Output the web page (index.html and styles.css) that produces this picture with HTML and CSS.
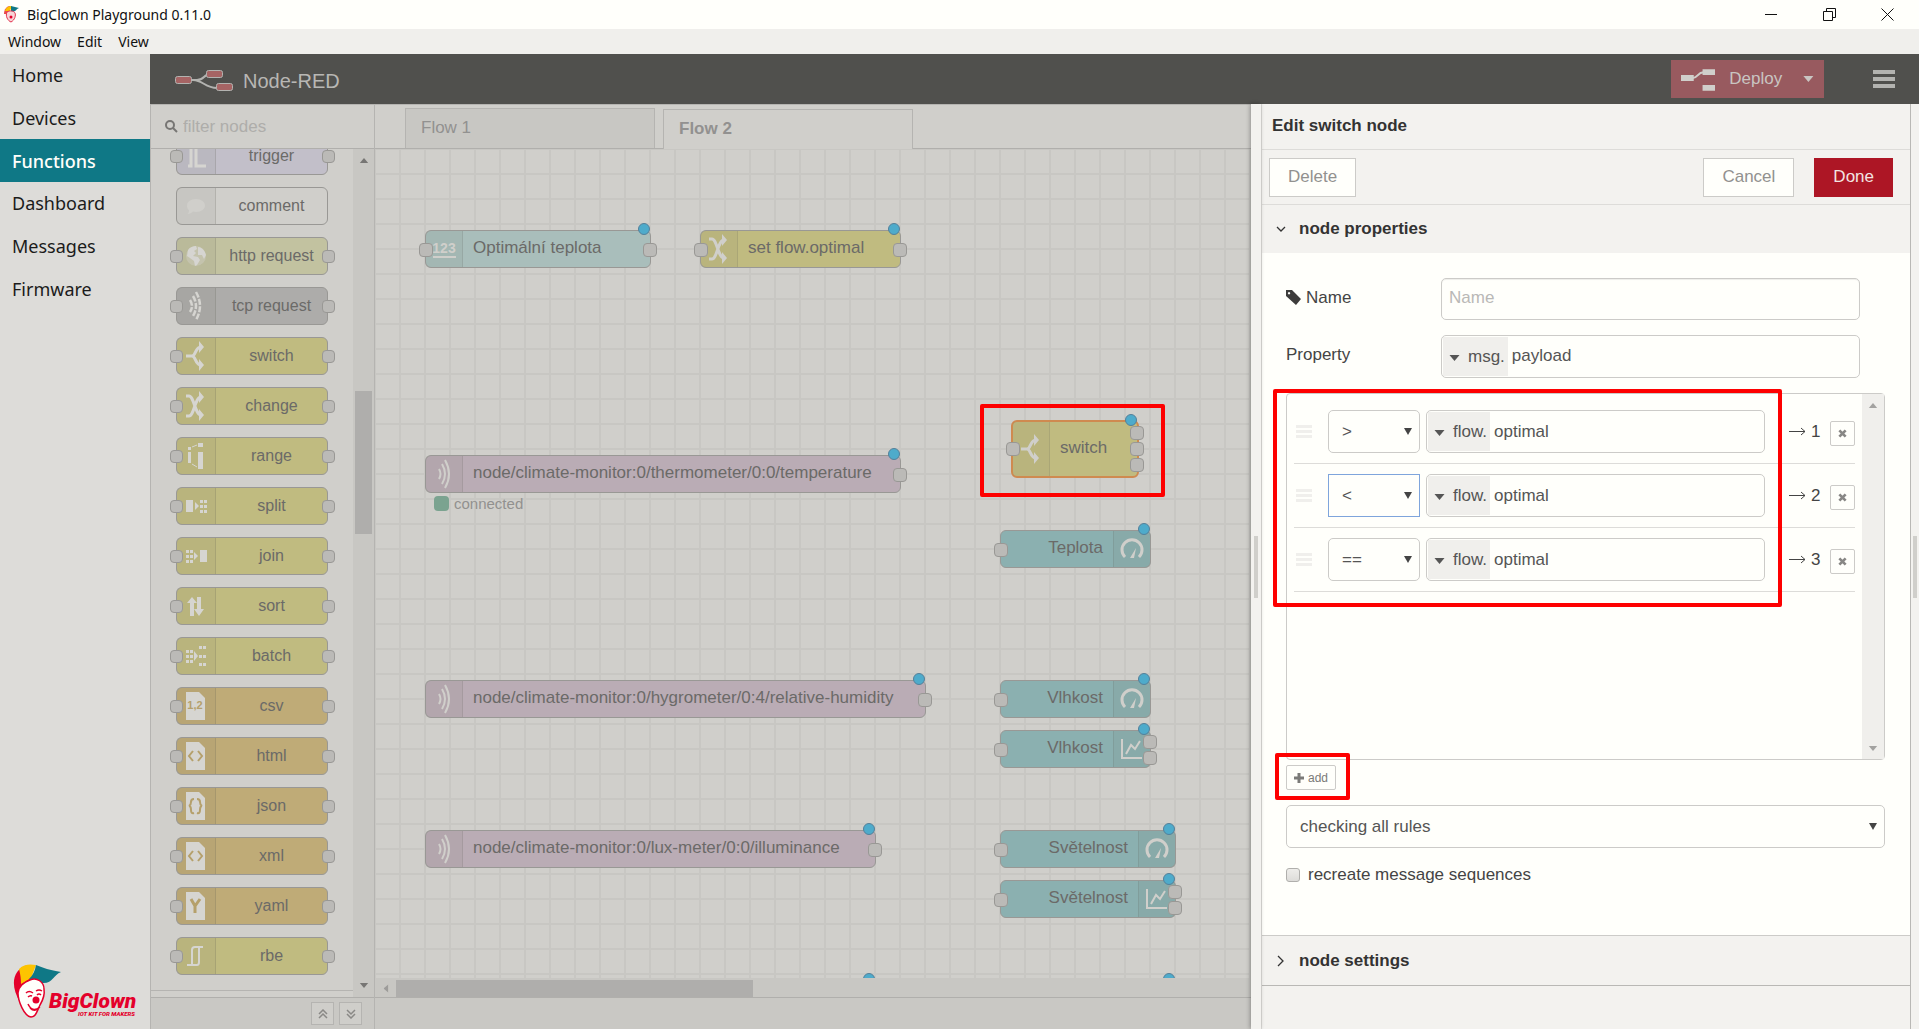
FILE: index.html
```html
<!DOCTYPE html>
<html lang="en">
<head>
<meta charset="utf-8">
<title>BigClown Playground 0.11.0</title>
<link rel="stylesheet" href="styles.css">
</head>
<body>
<svg class="sprite" aria-hidden="true">
  <symbol id="i-trigger" viewBox="0 0 24 30"><path d="M4 25h3V3h3M12 3v22h10" fill="none" stroke="currentColor" stroke-width="3"/></symbol>
  <symbol id="i-comment" viewBox="0 0 24 30"><path d="M12 8c5.500 0 9 3 9 6.500S17.500 21 12 21c-1 0-2 0-3-.4C7.500 22 6 23 3.500 23c1-1 1.500-2.200 1.500-3.600C3.500 18 3 16.500 3 14.500 3 11 6.500 8 12 8z" fill="currentColor"/></symbol>
  <symbol id="i-globe" viewBox="0 0 24 30"><circle cx="12" cy="15" r="10" fill="currentColor" opacity=".35"/><path d="M4 9c2-3 5-4 8-4l1 3-3 2 2 2-3 3 5 1 2 3-3 5-2 1-1-5-4-3-3-2zM14 6c4 0 7 4 8 8l-2 4-2-4-4 0 0-4z" fill="currentColor"/></symbol>
  <symbol id="i-wave" viewBox="0 0 24 30"><path d="M7 10q3 5 0 10M10 5q6 10 0 20M13 1q8 14 0 28" fill="none" stroke="currentColor" stroke-width="2"/></symbol>
  <symbol id="i-tcp" viewBox="0 0 24 30"><path d="M6 9q4 6 0 12M9 5q6 10 0 20M12 1q8 14 0 28" fill="none" stroke="currentColor" stroke-width="2.500" stroke-dasharray="6 1.500"/></symbol>
  <symbol id="i-switch" viewBox="0 0 24 30"><path d="M2 15h6c4 0 3-9 9-9M8 15c4 0 3 9 9 9" fill="none" stroke="currentColor" stroke-width="3"/><path d="M15 0l5 6-5 6zM15 18l5 6-5 6z" fill="currentColor"/></symbol>
  <symbol id="i-change" viewBox="0 0 24 30"><path d="M2 5h3c5 0 6 19 12 19M2 25h3c5 0 6-19 12-19" fill="none" stroke="currentColor" stroke-width="3"/><path d="M15 0l5 6-5 6zM15 18l5 6-5 6z" fill="currentColor"/></symbol>
  <symbol id="i-range" viewBox="0 0 24 30"><path d="M4 6h3v3H4zM4 11h3v11H4zM14 2h5v4h-5zM14 11h5v17h-5z" fill="currentColor"/><path d="M8 6l5-2M8 23l5 3" stroke="currentColor"/></symbol>
  <symbol id="i-split" viewBox="0 0 24 30"><path d="M2 9h7v12H2zM11 11l4 4-4 4zM16 9h3v3h-3zM20 9h3v3h-3zM16 14h3v3h-3zM20 14h3v3h-3zM16 19h3v3h-3zM20 19h3v3h-3z" fill="currentColor"/></symbol>
  <symbol id="i-join" viewBox="0 0 24 30"><path d="M16 9h7v12h-7zM10 11l4 4-4 4zM2 9h3v3H2zM6 9h3v3H6zM2 14h3v3H2zM6 14h3v3H6zM2 19h3v3H2zM6 19h3v3H6z" fill="currentColor"/></symbol>
  <symbol id="i-sort" viewBox="0 0 24 30"><path d="M8 6l5 6h-3v13H6V12H3zM13 6h4v12h3l-5 7-5-7h3z" fill="currentColor"/></symbol>
  <symbol id="i-batch" viewBox="0 0 24 30"><path d="M10 10l4 5-4 5zM2 9h3v3H2zM6 9h3v3H6zM2 14h3v3H2zM6 14h3v3H6zM2 19h3v3H2zM6 19h3v3H6zM15 5h3v3h-3zM19 5h3v3h-3zM15 14h3v3h-3zM19 14h3v3h-3zM15 22h3v3h-3zM19 22h3v3h-3z" fill="currentColor"/></symbol>
  <symbol id="i-file" viewBox="0 0 24 30"><path d="M2 1h13l6 6v22H2z" fill="currentColor"/></symbol>
  <symbol id="i-rbe" viewBox="0 0 24 30"><path d="M3 24h10q2 0 2-3V6M19 6H11q-3 0-3 3v15" fill="none" stroke="currentColor" stroke-width="2"/></symbol>
  <symbol id="i-gauge" viewBox="0 0 24 30"><path d="M5 23a10 10 0 1 1 14 0" fill="none" stroke="currentColor" stroke-width="3"/><path d="M10 24l6-10-2 10z" fill="currentColor"/></symbol>
  <symbol id="i-chart" viewBox="0 0 24 30"><path d="M2 5v19h20M6 20l5-9 4 4 5-8" fill="none" stroke="currentColor" stroke-width="2"/></symbol>
  <symbol id="i-grip" viewBox="0 0 16 14"><path d="M0 1.500h16M0 6.500h16M0 11.500h16" stroke="currentColor" stroke-width="3"/></symbol>
  <symbol id="i-x" viewBox="0 0 10 10"><path d="M1.500 1.500l7 7M8.500 1.500l-7 7" stroke="currentColor" stroke-width="3"/></symbol>
  <symbol id="i-caret" viewBox="0 0 10 6"><path d="M0 0h10L5 6z" fill="currentColor"/></symbol>
</svg>

<header class="titlebar">
  <svg class="app-icon" viewBox="0 0 15 17"><path d="M0 8C0 3 3 0 6 0v5L3 8z" fill="#e94b4b"/><path d="M1 5c1-4 4-5 7-5L6 5z" fill="#fdc400"/><path d="M7 0l8 2c-3 1-3 4-8 4z" fill="#0f7886"/><path d="M3 6c3-2 7-1 8 1s0 7-4 9C4 15 1 10 3 6z" fill="#f7d5d8" stroke="#e3304b"/><circle cx="7" cy="11" r="1.500" fill="#e4002b"/></svg>
  <h1 class="titlebar-text">BigClown Playground 0.11.0</h1>
  <div class="win-controls">
    <button class="win-btn" aria-label="Minimize"><svg width="12" height="13"><path d="M0 6.500h12" stroke="#111"/></svg></button>
    <button class="win-btn" aria-label="Restore"><svg width="13" height="13"><path d="M.5 3.500h9v9h-9zM3.500 3V.5h9v9H10" fill="none" stroke="#111"/></svg></button>
    <button class="win-btn" aria-label="Close"><svg width="13" height="13"><path d="M.5.5l12 12M12.500.5l-12 12" stroke="#111"/></svg></button>
  </div>
</header>
<nav class="menubar"><button>Window</button><button>Edit</button><button>View</button></nav>

<div class="shell">
  <aside class="sidebar">
    <nav class="side-nav">
      <a href="#home">Home</a><a href="#devices">Devices</a><a href="#functions" class="active">Functions</a><a href="#dashboard">Dashboard</a><a href="#messages">Messages</a><a href="#firmware">Firmware</a>
    </nav>
    <svg class="brand" viewBox="0 0 128 56" role="img" aria-label="BigClown IoT kit for makers">
      <path d="M8 38C-2 22 0 5 16 1L20 16 10 22z" fill="#e4002b"/>
      <path d="M7 5C12 0 18 0 24 1L19 14 9 20C9 13 8 9 7 5z" fill="#fdc400"/>
      <path d="M24 1c7 3 14 5 25 7-8 3-8 12-19 11-5-1-8-3-13-4 4-4 6-8 7-14z" fill="#0f7886"/>
      <path d="M18 16c7-3 14 2 14 9 1 6-1 11-4 16-3 6-4 12-9 12C12 52 6 37 6 29c0-6 6-11 12-13z" fill="#fffffb" stroke="#e4002b" stroke-width="1.500"/>
      <path d="M14 29q3-3 7 0M24 27q3-2 6 0M16 33q2-2 4-1M25 31q2-2 4 0M16 40q4 9 12 3M18 44q4 4 8 1" fill="none" stroke="#e4002b" stroke-width="1.500"/>
      <circle cx="24" cy="36" r="3.500" fill="#e4002b"/>
      <text class="brand-name" x="37" y="44">BigClown</text>
      <text class="brand-tag" x="66" y="52">IOT KIT FOR MAKERS</text>
    </svg>
  </aside>

  <main class="nodered">
    <header class="nr-header">
      <svg class="nr-logo" width="58" height="24" viewBox="0 0 58 24"><path d="M16 11h6c8 0 6-6 14-6M18 11c10 0 12 8 24 8" fill="none" stroke="#b3b3b0" stroke-width="2"/><g fill="#a66464" stroke="#b3b3b0"><rect x=".5" y="7.500" width="16" height="7" rx="2"/><rect x="31.500" y="1.500" width="16" height="7" rx="2"/><rect x="41.500" y="14.500" width="16" height="7" rx="2"/></g></svg>
      <span class="nr-title">Node-RED</span>
      <button class="deploy"><svg width="35" height="23" viewBox="0 0 35 23"><path d="M0 7h13v6H0zM22 1h13v6H22zM22 17h13v6H22z" fill="#d0cfcb"/><path d="M12 10c5 0 5-6 11-6" fill="none" stroke="#d0cfcb" stroke-width="2"/></svg><span>Deploy</span><svg class="deploy-caret"><use href="#i-caret"/></svg></button>
      <button class="burger" aria-label="Menu"><svg width="22" height="18"><path d="M0 2h22M0 9h22M0 16h22" stroke="#b3b3b0" stroke-width="4"/></svg></button>
    </header>

    <div class="nr-body">
      <section class="palette">
        <label class="filter"><svg width="13" height="13" viewBox="0 0 13 13"><circle cx="5" cy="5" r="4" fill="none" stroke="#777674" stroke-width="2"/><path d="M8 8l4 4" stroke="#777674" stroke-width="2"/></svg><input type="text" placeholder="filter nodes" aria-label="filter nodes"></label>
        <div class="palette-main">
          <div class="palette-list">
            <div class="pnode lilac"><span class="pic"><svg><use href="#i-trigger"/></svg></span><span class="plabel">trigger</span><i class="port in"></i><i class="port out"></i></div>
            <div class="pnode plain"><span class="pic"><svg><use href="#i-comment"/></svg></span><span class="plabel">comment</span></div>
            <div class="pnode pale"><span class="pic"><svg><use href="#i-globe"/></svg></span><span class="plabel">http request</span><i class="port in"></i><i class="port out"></i></div>
            <div class="pnode grey"><span class="pic"><svg><use href="#i-tcp"/></svg></span><span class="plabel">tcp request</span><i class="port in"></i><i class="port out"></i></div>
            <div class="pnode olive"><span class="pic"><svg><use href="#i-switch"/></svg></span><span class="plabel">switch</span><i class="port in"></i><i class="port out"></i></div>
            <div class="pnode olive"><span class="pic"><svg><use href="#i-change"/></svg></span><span class="plabel">change</span><i class="port in"></i><i class="port out"></i></div>
            <div class="pnode olive"><span class="pic"><svg><use href="#i-range"/></svg></span><span class="plabel">range</span><i class="port in"></i><i class="port out"></i></div>
            <div class="pnode olive"><span class="pic"><svg><use href="#i-split"/></svg></span><span class="plabel">split</span><i class="port in"></i><i class="port out"></i></div>
            <div class="pnode olive"><span class="pic"><svg><use href="#i-join"/></svg></span><span class="plabel">join</span><i class="port in"></i><i class="port out"></i></div>
            <div class="pnode olive"><span class="pic"><svg><use href="#i-sort"/></svg></span><span class="plabel">sort</span><i class="port in"></i><i class="port out"></i></div>
            <div class="pnode olive"><span class="pic"><svg><use href="#i-batch"/></svg></span><span class="plabel">batch</span><i class="port in"></i><i class="port out"></i></div>
            <div class="pnode tan"><span class="pic"><svg viewBox="0 0 24 30"><use href="#i-file"/><text x="11" y="18" text-anchor="middle" class="glyph">1,2</text></svg></span><span class="plabel">csv</span><i class="port in"></i><i class="port out"></i></div>
            <div class="pnode tan"><span class="pic"><svg viewBox="0 0 24 30"><use href="#i-file"/><path class="cut" d="M9 10l-4 5 4 5M14 10l4 5-4 5"/></svg></span><span class="plabel">html</span><i class="port in"></i><i class="port out"></i></div>
            <div class="pnode tan"><span class="pic"><svg viewBox="0 0 24 30"><use href="#i-file"/><path class="cut" d="M10 8q-3 0-3 3t-2 4q2 0 2 4t3 3M13 8q3 0 3 3t2 4q-2 0-2 4t-3 3"/></svg></span><span class="plabel">json</span><i class="port in"></i><i class="port out"></i></div>
            <div class="pnode tan"><span class="pic"><svg viewBox="0 0 24 30"><use href="#i-file"/><path class="cut" d="M9 10l-4 5 4 5M14 10l4 5-4 5"/></svg></span><span class="plabel">xml</span><i class="port in"></i><i class="port out"></i></div>
            <div class="pnode tan"><span class="pic"><svg viewBox="0 0 24 30"><use href="#i-file"/><path class="cut bold" d="M7 8l4 7 5-7M11 14v8"/></svg></span><span class="plabel">yaml</span><i class="port in"></i><i class="port out"></i></div>
            <div class="pnode olive"><span class="pic"><svg><use href="#i-rbe"/></svg></span><span class="plabel">rbe</span><i class="port in"></i><i class="port out"></i></div>
          </div>
          <div class="vscroll"><svg class="arrow up"><use href="#i-caret"/></svg><div class="vthumb"></div><svg class="arrow"><use href="#i-caret"/></svg></div>
        </div>
        <footer class="palette-foot">
          <button aria-label="Collapse all"><svg width="10" height="10"><path d="M1 5l4-4 4 4M1 9l4-4 4 4" fill="none" stroke="#8a8986" stroke-width="1.500"/></svg></button>
          <button aria-label="Expand all"><svg width="10" height="10"><path d="M1 1l4 4 4-4M1 5l4 4 4-4" fill="none" stroke="#8a8986" stroke-width="1.500"/></svg></button>
        </footer>
      </section>

      <section class="workspace">
        <nav class="tabs"><a href="#flow1" class="tab">Flow 1</a><a href="#flow2" class="tab current">Flow 2</a></nav>
        <div class="canvas">
          <div class="node ice" style="left:50px;top:81px;width:226px"><span class="nic num">123</span><span class="nlabel">Optimální teplota</span><i class="port in"></i><i class="port out"></i><i class="dot"></i></div>
          <div class="node olive" style="left:325px;top:81px;width:201px"><span class="nic"><svg><use href="#i-change"/></svg></span><span class="nlabel">set flow.optimal</span><i class="port in"></i><i class="port out"></i><i class="dot"></i></div>
          <div class="node mauve" style="left:50px;top:306px;width:476px"><span class="nic"><svg><use href="#i-wave"/></svg></span><span class="nlabel">node/climate-monitor:0/thermometer/0:0/temperature</span><i class="port out"></i><i class="dot"></i></div>
          <div class="status" style="left:59px;top:347px"><i></i>connected</div>
          <div class="node olive tall selected" style="left:636px;top:271px;width:128px"><span class="nic"><svg><use href="#i-switch"/></svg></span><span class="nlabel">switch</span><i class="port in"></i><i class="port out first"></i><i class="port out"></i><i class="port out last"></i><i class="dot"></i></div>
          <div class="node teal right" style="left:625px;top:381px;width:151px"><span class="nic"><svg><use href="#i-gauge"/></svg></span><span class="nlabel">Teplota</span><i class="port in"></i><i class="dot"></i></div>
          <div class="node mauve" style="left:50px;top:531px;width:501px"><span class="nic"><svg><use href="#i-wave"/></svg></span><span class="nlabel">node/climate-monitor:0/hygrometer/0:4/relative-humidity</span><i class="port out"></i><i class="dot"></i></div>
          <div class="node teal right" style="left:625px;top:531px;width:151px"><span class="nic"><svg><use href="#i-gauge"/></svg></span><span class="nlabel">Vlhkost</span><i class="port in"></i><i class="dot"></i></div>
          <div class="node teal right" style="left:625px;top:581px;width:151px"><span class="nic"><svg><use href="#i-chart"/></svg></span><span class="nlabel">Vlhkost</span><i class="port in"></i><i class="port out upper"></i><i class="port out lower"></i><i class="dot"></i></div>
          <div class="node mauve" style="left:50px;top:681px;width:451px"><span class="nic"><svg><use href="#i-wave"/></svg></span><span class="nlabel">node/climate-monitor:0/lux-meter/0:0/illuminance</span><i class="port out"></i><i class="dot"></i></div>
          <div class="node teal right" style="left:625px;top:681px;width:176px"><span class="nic"><svg><use href="#i-gauge"/></svg></span><span class="nlabel">Světelnost</span><i class="port in"></i><i class="dot"></i></div>
          <div class="node teal right" style="left:625px;top:731px;width:176px"><span class="nic"><svg><use href="#i-chart"/></svg></span><span class="nlabel">Světelnost</span><i class="port in"></i><i class="port out upper"></i><i class="port out lower"></i><i class="dot"></i></div>
          <div class="node mauve" style="left:50px;top:831px;width:451px"><i class="dot"></i></div>
          <div class="node teal" style="left:625px;top:831px;width:176px"><i class="dot"></i></div>
          <div class="callout" style="left:605px;top:255px;width:185px;height:93px"></div>
        </div>
        <div class="hscroll"><svg class="arrow left"><use href="#i-caret"/></svg><div class="hthumb"></div></div>
        <footer class="ws-foot"></footer>
      </section>

      <div class="gutter"><div class="handle"></div></div>
      <form class="tray" onsubmit="return false">
        <h2 class="tray-title">Edit switch node</h2>
        <div class="tray-actions"><button class="btn">Delete</button><span class="grow"></span><button class="btn">Cancel</button><button class="btn primary">Done</button></div>
        <h3 class="section-head"><svg width="10" height="10"><path d="M1 3l4 4 4-4" fill="none" stroke="#333" stroke-width="1.300"/></svg>node properties</h3>
        <div class="props">
          <div class="field"><label for="name"><svg width="15" height="15" viewBox="0 0 15 15"><path fill-rule="evenodd" d="M0 0h6l9 9-5 6L0 6zM3 2a1.200 1.200 0 1 0 .1 0z" fill="#3d3c3b"/></svg>Name</label><input id="name" type="text" placeholder="Name"></div>
          <div class="field"><label for="prop">Property</label><div class="typed wide"><button class="type"><svg class="car"><use href="#i-caret"/></svg>msg.</button><input id="prop" type="text" value="payload"></div></div>
          <div class="rules-wrap">
            <div class="rules">
              <ol class="rule-list">
                <li><svg class="grip"><use href="#i-grip"/></svg><span class="sel"><select aria-label="Operator 1"><option>&gt;</option></select></span><div class="typed"><button class="type"><svg class="car"><use href="#i-caret"/></svg>flow.</button><input type="text" value="optimal" aria-label="Value 1"></div><span class="outp"><svg width="17" height="9"><path d="M0 4.500h16M12 1l4 3.500-4 3.500" fill="none" stroke="#444"/></svg>1</span><button class="del" aria-label="Remove rule 1"><svg><use href="#i-x"/></svg></button></li>
                <li><svg class="grip"><use href="#i-grip"/></svg><span class="sel focus"><select aria-label="Operator 2"><option>&lt;</option></select></span><div class="typed"><button class="type"><svg class="car"><use href="#i-caret"/></svg>flow.</button><input type="text" value="optimal" aria-label="Value 2"></div><span class="outp"><svg width="17" height="9"><path d="M0 4.500h16M12 1l4 3.500-4 3.500" fill="none" stroke="#444"/></svg>2</span><button class="del" aria-label="Remove rule 2"><svg><use href="#i-x"/></svg></button></li>
                <li><svg class="grip"><use href="#i-grip"/></svg><span class="sel"><select aria-label="Operator 3"><option>==</option></select></span><div class="typed"><button class="type"><svg class="car"><use href="#i-caret"/></svg>flow.</button><input type="text" value="optimal" aria-label="Value 3"></div><span class="outp"><svg width="17" height="9"><path d="M0 4.500h16M12 1l4 3.500-4 3.500" fill="none" stroke="#444"/></svg>3</span><button class="del" aria-label="Remove rule 3"><svg><use href="#i-x"/></svg></button></li>
              </ol>
              <div class="vscroll light"><svg class="arrow up"><use href="#i-caret"/></svg><svg class="arrow"><use href="#i-caret"/></svg></div>
            </div>
            <div class="callout rules-mark"></div>
          </div>
          <div class="add-row"><button class="add"><svg width="10" height="10"><path d="M5 0v10M0 5h10" stroke="#7b7a78" stroke-width="3"/></svg>add</button><div class="callout add-mark"></div></div>
          <span class="sel check-sel"><select aria-label="Rule checking"><option>checking all rules</option></select></span>
          <label class="recreate"><input type="checkbox">recreate message sequences</label>
        </div>
        <h3 class="section-head closed"><svg width="10" height="12"><path d="M2 1l5 5-5 5" fill="none" stroke="#333" stroke-width="1.300"/></svg>node settings</h3>
        <div class="tray-rest"></div>
      </form>
      <div class="gutter slim"><div class="handle"></div></div>
    </div>
  </main>
</div>
</body>
</html>
```
FILE: styles.css
```css
* { box-sizing: border-box; }
body {
  margin: 0; height: 100vh; overflow: hidden; display: flex; flex-direction: column;
  font-family: "Liberation Sans", Arial, sans-serif; font-size: 17px; color: #444;
  background: #fffffb;
}
button, input, select { font: inherit; color: inherit; }
button { padding: 0; border: 0; background: none; }
h1, h2, h3 { margin: 0; font-size: 17px; }
.sprite { position: absolute; width: 0; height: 0; }

/* window chrome */
.titlebar { flex: none; height: 29px; display: flex; align-items: center; padding: 0 0 0 4px; background: #fffffb; font-family: "Noto Sans", sans-serif; color: #111; }
.app-icon { width: 15px; height: 17px; }
.titlebar-text { font-size: 14px; font-weight: 400; margin-left: 8px; }
.win-controls { margin-left: auto; display: flex; padding-right: 3px; }
.win-btn { width: 58px; height: 29px; display: grid; place-items: center; }
.menubar { flex: none; height: 25px; display: flex; align-items: center; gap: 16px; padding-left: 8px; background: #f0efec; font-family: "Noto Sans", sans-serif; font-size: 14px; color: #111; }

.shell { flex: 1; min-height: 0; display: flex; }
.sidebar { width: 150px; flex: none; background: #dddcd9; display: flex; flex-direction: column; justify-content: space-between; font-family: "Noto Sans", sans-serif; }
.side-nav { height: 256px; display: grid; grid-auto-rows: 1fr; }
.side-nav a { display: flex; align-items: center; padding-left: 12px; font-size: 18px; color: #1b1b1b; text-decoration: none; }
.side-nav .active { background: #0f7886; color: #fffffb; font-weight: 500; }
.brand { width: 128px; height: 56px; margin: 0 0 9px 12px; }
.brand-name { font: italic 900 21px Roboto, sans-serif; fill: #e4002b; }
.brand-tag { font: italic 900 6px Roboto, sans-serif; fill: #e4002b; }

/* editor frame */
.nodered { flex: 1; min-width: 0; display: flex; flex-direction: column; }
.nr-header { height: 50px; flex: none; display: flex; align-items: center; padding: 0 24px 0 25px; background: #50504d; color: #b8b7b4; }
.nr-title { font-size: 20px; margin: 4px 0 0 10px; }
.nr-logo { margin-top: 4px; }
.deploy { margin-left: auto; width: 153px; height: 38px; display: flex; align-items: center; padding: 0 10px; background: #985a5f; color: #c9c5c2; }
.deploy span { margin: 0 21px 0 14px; }
.deploy-caret { width: 11px; height: 6px; }
.burger { margin-left: 49px; height: 18px; }
.nr-body { flex: 1; min-height: 0; display: flex; }

.palette { width: 225px; flex: none; display: flex; flex-direction: column; background: #d0cfcb; border: 1px solid #b5b4b1; border-width: 1px 1px 0 1px; }
.filter { height: 44px; flex: none; display: flex; align-items: center; gap: 5px; padding-left: 14px; border-bottom: 1px solid #b0afac; }
.filter input { width: 180px; border: 0; padding: 0; background: none; outline: 0; }
.filter input::placeholder { color: #aeadaa; }
.palette-main { flex: 1; min-height: 0; display: flex; }
.palette-list { flex: 1; display: flex; flex-direction: column; justify-content: flex-end; gap: 12px; padding: 0 25px 15px; margin-bottom: 6px; border-bottom: 1px solid #b5b4b1; overflow: hidden; }
.palette-foot { height: 32px; flex: none; display: flex; justify-content: flex-end; gap: 5px; padding: 4px 12px; background: #c9c8c4; border-top: 1px solid #b0afac; }
.palette-foot button { width: 23px; height: 23px; display: grid; place-items: center; border: 1px solid #b5b4b1; background: #cfceca; }

.pnode { position: relative; flex: none; width: 152px; height: 38px; display: flex; border: 1px solid #999895; border-radius: 6px; color: #6b6a68; font-size: 16px; }
.pic { width: 39px; display: grid; place-items: center; background: rgb(100 100 90 / 8%); border-right: 1px solid rgb(90 90 80 / 18%); color: #d6d5d1; }
.pic svg { width: 24px; height: 30px; }
.plabel { flex: 1; display: grid; place-items: center; padding-bottom: 1px; }
.cut { fill: none; stroke: #b5a06b; stroke-width: 2; }
.cut.bold { stroke-width: 3; }
.glyph { font: bold 11px "Liberation Sans", sans-serif; fill: #b5a06b; }
.lilac { background: #c2bfc9; }
.plain { background: #d0cfcb; }
.plain .pic { color: #d0cfcb; }
.pale { background: #c2c2a0; }
.grey { background: #adacaa; }
.olive { background: #c0bb80; }
.tan { background: #bfab77; }
.ice { background: #a9bebb; }
.mauve { background: #baacb5; }
.teal { background: #8bb0b0; }

.port { position: absolute; top: 12px; width: 13px; height: 13px; border: 1px solid #999895; border-radius: 4px; background: #bbbab7; }
.port.in { left: -7px; }
.port.out { right: -8px; }

.vscroll { width: 21px; display: flex; flex-direction: column; justify-content: space-between; align-items: center; padding: 9px 0; background: #c8c7c3; color: #777674; }
.arrow { width: 10px; height: 5px; }
.arrow.up { transform: rotate(180deg); }
.vthumb { width: 17px; height: 143px; margin-top: 228px; margin-bottom: auto; flex: none; background: #afaeac; }
.vscroll.light { width: 22px; background: #f0efec; color: #a3a2a0; padding: 9px 0 8px; }

.workspace { flex: 1; min-width: 0; display: flex; flex-direction: column; background: #d0cfcb; border-top: 1px solid #b5b4b1; }
.tabs { height: 44px; flex: none; display: flex; align-items: flex-end; gap: 8px; padding-left: 30px; border-bottom: 1px solid #b0afac; }
.tab { width: 250px; height: 40px; padding: 9px 15px; border: 1px solid #b5b4b1; border-bottom: 0; background: #c8c7c3; color: #929190; text-decoration: none; }
.tab.current { background: #d0cfcb; font-weight: bold; margin-bottom: -1px; }
.canvas {
  position: relative; flex: 1; min-height: 0; overflow: hidden;
  background-image: linear-gradient(#c8c7c3 2px, transparent 2px), linear-gradient(90deg, #c8c7c3 2px, transparent 2px);
  background-size: 25px 25px; background-position: -1px -1px;
}
.node { position: absolute; height: 38px; display: flex; border: 1px solid #999895; border-radius: 6px; color: #6b6a68; }
.node .port { width: 14px; height: 14px; }
.node .port.out { right: -7px; }
.node.tall { height: 58px; }
.nic { width: 37px; flex: none; display: grid; place-items: center; background: rgb(100 100 90 / 8%); border-right: 1px solid rgb(90 90 80 / 15%); color: #d0cfcb; }
.nic svg { width: 24px; height: 30px; }
.num { font-size: 14px; font-weight: bold; align-content: center; }
.num::after { content: ""; width: 23px; height: 2px; background: #d0cfcb; }
.nlabel { flex: 1; align-self: center; padding: 0 10px 2px; white-space: nowrap; }
.node.right { flex-direction: row-reverse; }
.right .nic { border-right: 0; border-left: 1px solid rgb(90 90 80 / 15%); }
.right .nlabel { text-align: right; }
.selected { border: 2px solid #cf8a50; }
.tall .port { top: 20px; }
.tall .first { top: 4px; }
.tall .last { top: 36px; }
.upper { top: 4px; }
.lower { top: 20px; }
.dot { position: absolute; top: -8px; right: 0; width: 12px; height: 12px; border: 1px solid #54809a; border-radius: 50%; background: #4eabcb; }
.status { position: absolute; display: flex; align-items: center; gap: 5px; font-size: 15px; line-height: 15px; color: #92918f; }
.status i { width: 15px; height: 15px; border-radius: 4px; background: #7ba390; }
.callout { position: absolute; border: 4px solid #fe0000; border-radius: 2px; pointer-events: none; }
.hscroll { height: 19px; flex: none; display: flex; align-items: center; gap: 5px; padding: 2px 0 0 6px; background: #c8c7c3; color: #9d9c9a; }
.arrow.left { transform: rotate(90deg); }
.hthumb { width: 41%; height: 17px; background: #afaeac; }
.ws-foot { height: 32px; flex: none; background: #c9c8c4; border-top: 1px solid #b0afac; }

/* edit tray */
.gutter { width: 10px; flex: none; display: grid; place-items: center; align-content: center; background: #f3f2ef; box-shadow: -1px 0 4px rgb(0 0 0 / 30%); z-index: 1; }
.gutter .handle { width: 4px; height: 62px; background: #d0cfcb; }
.gutter.slim { width: 8px; box-shadow: none; }
.tray { width: 650px; flex: none; display: flex; flex-direction: column; border: 1px solid #b9b8b5; border-width: 0 1px; border-left-color: #dddcd9; background: #f3f2ef; }
.tray-title { height: 46px; flex: none; padding: 12px 10px; line-height: 20px; color: #333; border-bottom: 1px solid #dddcd9; }
.tray-actions { height: 55px; flex: none; display: flex; align-items: center; gap: 20px; padding: 0 17px 0 7px; border-bottom: 1px solid #dddcd9; }
.grow { flex: 1; }
.btn { height: 39px; padding: 0 18px; border: 1px solid #cccbc8; background: #fffffb; color: #92918f; }
.btn.primary { border-color: #ad1625; background: #ad1625; color: #f3e4e2; }
.section-head { height: 48px; flex: none; display: flex; align-items: center; gap: 13px; padding-left: 14px; color: #333; }
.props { flex: none; height: 682px; padding: 25px 25px 0 24px; display: flex; flex-direction: column; background: #fffffb; }
.field { display: flex; align-items: center; height: 42px; margin-bottom: 15px; }
.field label { width: 155px; padding-bottom: 3px; }
.field label svg { margin-right: 5px; vertical-align: -2px; }
.field > input { flex: 1; height: 42px; margin-right: 25px; padding: 0 7px 2px; border: 1px solid #cccbc8; border-radius: 5px; background: #fffffb; box-shadow: inset 0 1px 1px rgb(0 0 0 / 7%); }
.field > input::placeholder { color: #b9b8b6; }
.typed { height: 43px; display: flex; padding: 1px; border: 1px solid #cccbc8; border-radius: 5px; background: #fffffb; color: #555; }
.typed.wide { flex: 1; margin-right: 25px; }
.typed input { flex: 1; min-width: 0; border: 0; padding: 0 4px; background: none; outline: 0; }
.type { display: flex; align-items: center; gap: 8px; padding: 1px 3px 0 6px; background: #f0efec; }
.car { width: 11px; height: 6px; margin-top: 2px; }
.rules-wrap { position: relative; margin-top: 1px; }
.rules { height: 367px; display: flex; border: 1px solid #cccbc8; border-radius: 4px; }
.rule-list { flex: 1; margin: 6px 7px 0; padding: 0; list-style: none; }
.rule-list li { height: 64px; display: flex; align-items: center; border-bottom: 1px solid #dddcd9; }
.rule-list .typed { flex: 1; margin-left: 6px; }
.grip { width: 16px; height: 14px; margin: 0 16px 0 2px; color: #f0efec; }
.sel { position: relative; width: 92px; height: 43px; display: flex; }
.sel select { appearance: none; width: 100%; border: 1px solid #cccbc8; border-radius: 5px; background: #fffffb; padding: 0 13px 1px; outline: 0; color: #555; }
.sel::after { content: ""; position: absolute; right: 8px; top: 18px; border: 4px solid transparent; border-top: 7px solid #444; border-bottom: 0; }
.sel.focus select { border-color: #7fa5dc; border-radius: 0; }
.outp { width: 41px; margin-left: 24px; display: flex; align-items: center; gap: 5px; }
.del { width: 25px; height: 25px; margin-top: 3px; display: grid; place-items: center; border: 1px solid #cccbc8; border-radius: 2px; color: #888785; }
.del svg { width: 9px; height: 9px; }
.rules-mark { left: -13px; top: -4px; width: 509px; height: 218px; }
.add-row { position: relative; height: 30px; margin: 5px 0 10px; display: flex; align-items: flex-start; }
.add { height: 25px; padding: 0 7px; display: flex; align-items: center; gap: 4px; border: 1px solid #cccbc8; border-radius: 2px; font-size: 12px; color: #7b7a78; }
.add-mark { left: -11px; top: -12px; width: 75px; height: 47px; }
.check-sel { width: 100%; }
.recreate { display: flex; align-items: center; gap: 8px; margin-top: 17px; line-height: 20px; }
.recreate input { appearance: none; width: 14px; height: 14px; margin: 0; border: 1px solid #b0afac; border-radius: 3px; background: linear-gradient(#eeedea, #dddcd9); }
.section-head.closed { height: 51px; border-top: 1px solid #cccbc8; border-bottom: 1px solid #b9b8b5; }
.tray-rest { flex: 1; }
```
